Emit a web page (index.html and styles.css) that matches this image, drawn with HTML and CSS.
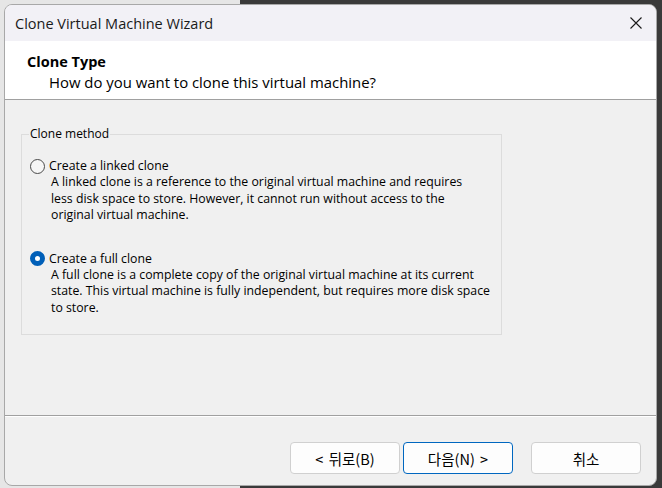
FILE: index.html
```html
<!DOCTYPE html>
<html lang="en">
<head>
<meta charset="utf-8">
<title>Clone Virtual Machine Wizard</title>
<link rel="stylesheet" href="styles.css">
</head>
<body>
<div class="window">
  <div class="titlebar">
    <span class="title">Clone Virtual Machine Wizard</span>
    <span class="close" aria-label="Close">
      <svg width="12" height="12" viewBox="0 0 12 12"><path d="M0.5 0.5 L11.5 11.5 M11.5 0.5 L0.5 11.5" stroke="#1a1a1a" stroke-width="1.1" fill="none"/></svg>
    </span>
  </div>
  <div class="header">
    <div class="h-title">Clone Type</div>
    <div class="h-sub">How do you want to clone this virtual machine?</div>
  </div>
  <div class="content">
    <fieldset class="group">
      <legend>Clone method</legend>
      <div class="option">
        <div class="opt-label"><span class="radio"></span>Create a linked clone</div>
        <div class="opt-desc">A linked clone is a reference to the original virtual machine and requires<br>less disk space to store. However, it cannot run without access to the<br>original virtual machine.</div>
      </div>
      <div class="option second">
        <div class="opt-label"><span class="radio checked"></span>Create a full clone</div>
        <div class="opt-desc">A full clone is a complete copy of the original virtual machine at its current<br>state. This virtual machine is fully independent, but requires more disk space<br>to store.</div>
      </div>
    </fieldset>
  </div>
  <div class="footer">
    <button class="btn">&lt; 뒤로(B)</button>
    <button class="btn default">다음(N) &gt;</button>
    <button class="btn cancel">취소</button>
  </div>
</div>
</body>
</html>
```
FILE: styles.css
```css
html, body {
  margin: 0;
  padding: 0;
}
body {
  width: 662px;
  height: 488px;
  overflow: hidden;
  background: linear-gradient(to right, #e6e6e6 0, #e6e6e6 240px, #3a3a3a 240px, #3a3a3a 100%);
  font-family: "Open Sans", "Noto Sans", "Noto Sans CJK KR", sans-serif;
  color: #000;
}
.window {
  margin: 4px 0 0 4px;
  width: 653px;
  height: 482px;
  box-sizing: border-box;
  border: 1px solid #a8a8a8;
  border-radius: 8px;
  overflow: hidden;
  background: #f0f0f0;
  display: flex;
  flex-direction: column;
}
.titlebar {
  height: 36px;
  flex: none;
  background: #f2f1f6;
  display: flex;
  align-items: center;
  justify-content: space-between;
  padding: 0 14px 0 10px;
}
.title {
  font-size: 14.5px;
  color: #1a1a1a;
  padding-top: 1px;
}
.close {
  display: flex;
  width: 12px;
  height: 12px;
}
.header {
  height: 59px;
  flex: none;
  box-sizing: border-box;
  background: #fff;
  border-bottom: 1px solid #a0a0a0;
  padding: 11px 0 0 22px;
}
.h-title {
  font-weight: 700;
  font-size: 14.5px;
  line-height: 20px;
}
.h-sub {
  font-size: 14.9px;
  line-height: 20px;
  padding-left: 22px;
}
.content {
  flex: 1;
  padding: 26px 0 0 16px;
}
.group {
  margin: 0;
  width: 481px;
  min-width: 0;
  height: 209px;
  box-sizing: border-box;
  border: 1px solid #dcdcdc;
  padding: 16px 8px 0 8px;
}
.group legend {
  font-size: 12px;
  padding: 0 1px;
  margin-left: -1px;
  line-height: 16px;
}
.option {
  font-size: 12.3px;
}
.option.second {
  margin-top: 27px;
}
.opt-label {
  display: flex;
  align-items: center;
  line-height: 16px;
  font-size: 12.3px;
}
.radio {
  width: 15px;
  height: 15px;
  box-sizing: border-box;
  border-radius: 50%;
  border: 1px solid #4a4a4a;
  background: #f6f6f6;
  margin-right: 4px;
  flex: none;
}
.radio.checked {
  border: 5px solid #005fb8;
  background: #fff;
}
.opt-desc {
  padding-left: 21px;
  line-height: 16.5px;
  white-space: nowrap;
}
.footer {
  height: 70px;
  flex: none;
  box-sizing: border-box;
  border-top: 1px solid #a0a0a0;
  box-shadow: inset 0 1px 0 #ffffff;
  display: flex;
  justify-content: flex-end;
  padding: 26px 15px 0 0;
  gap: 3px;
}
.btn {
  width: 110px;
  height: 32px;
  box-sizing: border-box;
  background: #fdfdfd;
  border: 1px solid #d0d0d0;
  border-radius: 4px;
  font-family: "Noto Sans CJK KR", "Open Sans", sans-serif;
  font-size: 14.5px;
  color: #000;
  padding: 0;
  word-spacing: 2px;
}
.btn.default {
  border-color: #0067c0;
}
.btn.cancel {
  margin-left: 15px;
}
```
